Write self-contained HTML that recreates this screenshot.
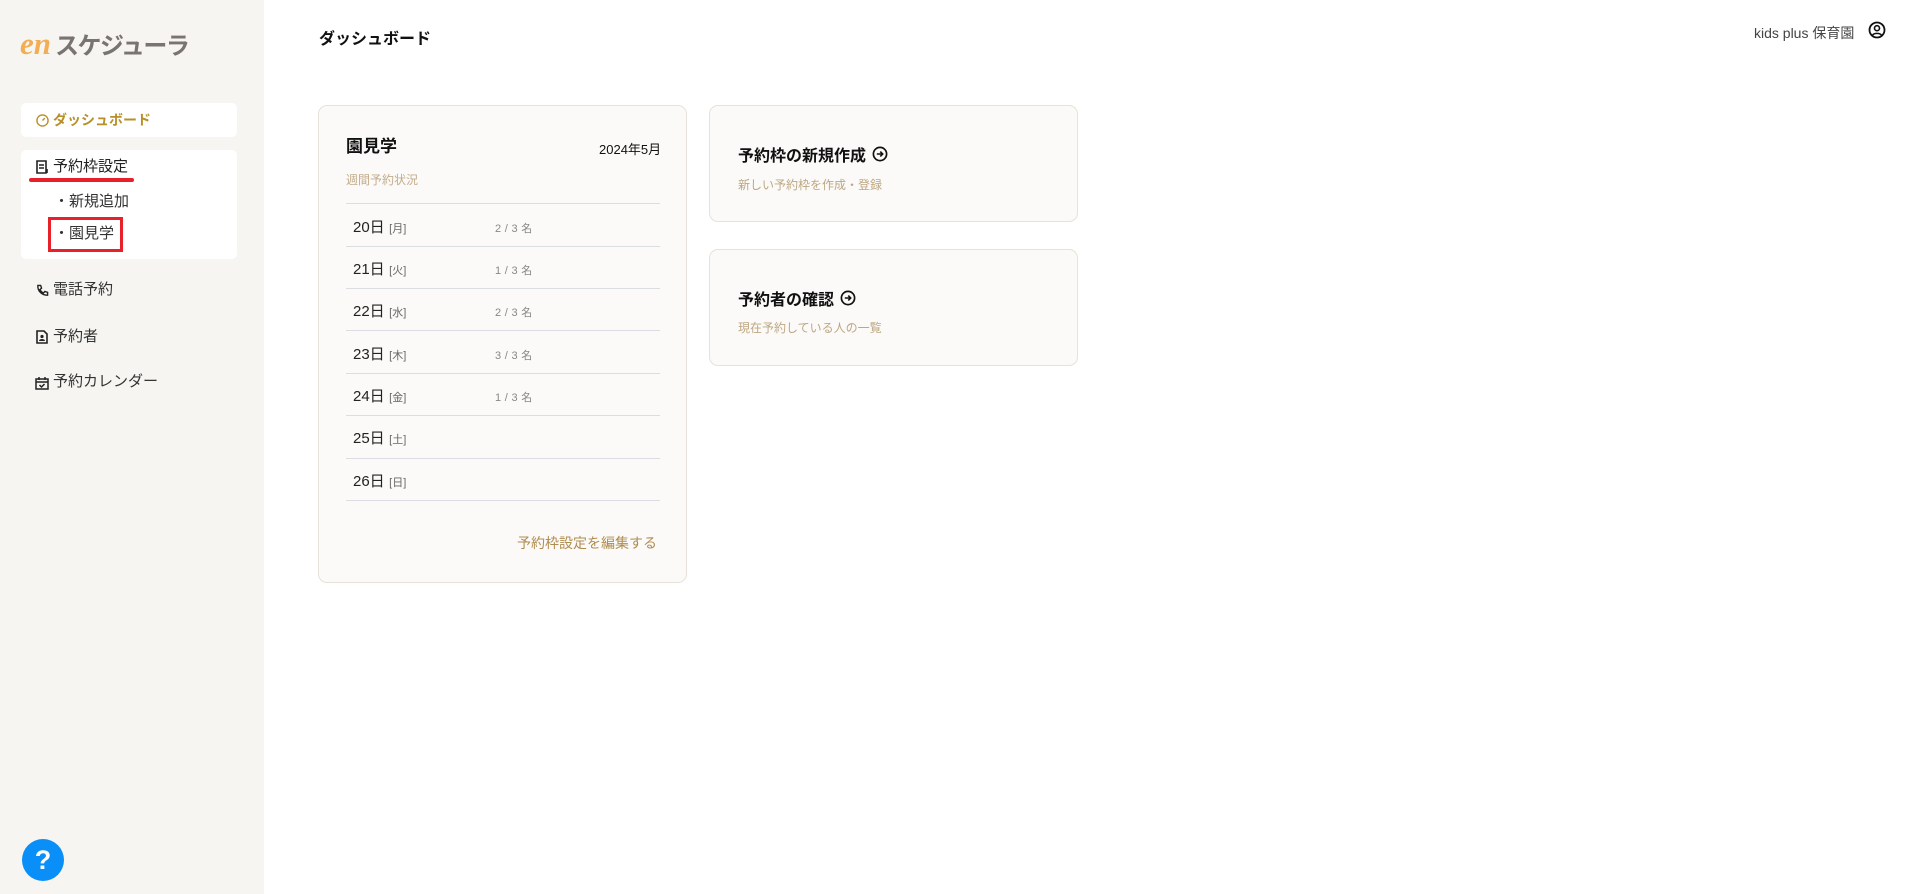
<!DOCTYPE html>
<html><head><meta charset="utf-8"><style>
*{margin:0;padding:0;box-sizing:border-box}
body{width:1906px;height:894px;background:#fff;font-family:"Liberation Sans","Noto Sans CJK JP",sans-serif;position:relative;overflow:hidden;color:#222}
.abs{position:absolute;white-space:nowrap}
.side{position:absolute;left:0;top:0;width:264px;height:894px;background:#f6f5f2}
.box{position:absolute;left:21px;width:216px;background:#fff;border-radius:5px}
.mi{font-size:15px;line-height:20px;color:#333}
.card{position:absolute;background:#fbfaf8;border:1px solid #e6e2da;border-radius:9px}
.line{position:absolute;left:346px;width:314px;height:1px;background:#dcdde2}
.d{font-size:15px;color:#222}
.w{font-size:11px;color:#666}
.c{font-size:11px;color:#888;letter-spacing:0.3px}
</style></head><body>
<div class="side">
  <div class="abs" style="left:20px;top:27px;line-height:34px;font-weight:bold;">
    <span style="font-family:'Liberation Serif',serif;font-style:italic;color:#f2ad55;font-size:31px">en</span><span style="color:#7a7470;font-size:24px;letter-spacing:-1.5px;margin-left:4px">スケジューラ</span></div>
  <div class="box" style="top:103px;height:34px"></div>
  <div class="box" style="top:150px;height:109px"></div>
  <svg class="abs" style="left:36px;top:114px" width="13" height="13" viewBox="0 0 14 14"><circle cx="7" cy="7" r="6" fill="none" stroke="#b8902a" stroke-width="1.5"/><path d="M7 7l2.5-2.5" stroke="#b8902a" stroke-width="1.5"/></svg>
  <div class="abs mi" style="left:53px;top:110px;color:#b8902a;font-weight:bold;font-size:14px">ダッシュボード</div>
  <svg class="abs" style="left:36px;top:160px" width="13" height="14" viewBox="0 0 13 14"><path d="M1 1h9v12H1z M3 5h5M3 8h5M11 9v4" fill="none" stroke="#222" stroke-width="1.6"/></svg>
  <div class="abs mi" style="left:53px;top:157px;color:#222">予約枠設定</div>
  <div class="abs" style="left:29px;top:178px;width:105px;height:4px;background:#e8202a;border-radius:2px"></div>
  <div class="abs mi" style="left:54px;top:192px">・新規追加</div>
  <div class="abs" style="left:48px;top:217px;width:75px;height:35px;border:3px solid #e8202a"></div>
  <div class="abs mi" style="left:54px;top:224px">・園見学</div>
  <svg class="abs" style="left:36px;top:284px" width="13" height="13" viewBox="0 0 14 14"><path d="M2 1.5l3 0 1 3-1.8 1.5a8 8 0 0 0 3.8 3.8l1.5-1.8 3 1v3c-6 .5-11-4.5-10.5-10.5z" fill="none" stroke="#222" stroke-width="1.5"/></svg>
  <div class="abs mi" style="left:53px;top:280px">電話予約</div>
  <svg class="abs" style="left:36px;top:330px" width="12" height="14" viewBox="0 0 12 14"><path d="M1 1h7l3 3v9H1z" fill="none" stroke="#222" stroke-width="1.6"/><circle cx="6" cy="6.5" r="1.6" fill="#222"/><path d="M3 11a3 2 0 0 1 6 0z" fill="#222"/></svg>
  <div class="abs mi" style="left:53px;top:327px">予約者</div>
  <svg class="abs" style="left:35px;top:376px" width="14" height="14" viewBox="0 0 14 14"><path d="M1 3h12v10H1zM1 6h12M4 1v3M10 1v3M4.5 9l2 2 3-3" fill="none" stroke="#222" stroke-width="1.5"/></svg>
  <div class="abs mi" style="left:53px;top:372px">予約カレンダー</div>
  <div class="abs" style="left:22px;top:839px;width:42px;height:42px;border-radius:50%;background:#0a8ef8;color:#fff;font-size:27px;font-weight:bold;text-align:center;line-height:42px">?</div>
</div>

<div class="abs" style="left:319px;top:25px;font-size:16px;font-weight:bold;color:#111">ダッシュボード</div>
<div class="abs" style="left:1754px;top:23px;font-size:14px;color:#444">kids plus 保育園</div>
<svg class="abs" style="left:1868px;top:21px" width="18" height="18" viewBox="0 0 18 18"><circle cx="9" cy="9" r="7.5" fill="none" stroke="#111" stroke-width="1.8"/><circle cx="9" cy="7.2" r="2.5" fill="none" stroke="#111" stroke-width="1.6"/><path d="M4.3 14.3a5.5 4 0 0 1 9.4 0" fill="none" stroke="#111" stroke-width="1.6"/></svg>

<div class="card" style="left:318px;top:105px;width:369px;height:478px"></div>
<div class="abs" style="left:346px;top:132px;font-size:17px;font-weight:bold;color:#111">園見学</div>
<div class="abs" style="left:599px;top:139px;font-size:13px;color:#111">2024年5月</div>
<div class="abs" style="left:346px;top:171px;font-size:12px;color:#c3ac8c">週間予約状況</div>
<div class="line" style="top:203px"></div>
<div class="abs" style="left:353px;top:216px"><span class="d">20日</span> <span class="w">[月]</span></div><div class="abs c" style="left:495px;top:220px">2 / 3 名</div>
<div class="line" style="top:246px"></div>
<div class="abs" style="left:353px;top:258px"><span class="d">21日</span> <span class="w">[火]</span></div><div class="abs c" style="left:495px;top:262px">1 / 3 名</div>
<div class="line" style="top:288px"></div>
<div class="abs" style="left:353px;top:300px"><span class="d">22日</span> <span class="w">[水]</span></div><div class="abs c" style="left:495px;top:304px">2 / 3 名</div>
<div class="line" style="top:330px"></div>
<div class="abs" style="left:353px;top:343px"><span class="d">23日</span> <span class="w">[木]</span></div><div class="abs c" style="left:495px;top:347px">3 / 3 名</div>
<div class="line" style="top:373px"></div>
<div class="abs" style="left:353px;top:385px"><span class="d">24日</span> <span class="w">[金]</span></div><div class="abs c" style="left:495px;top:389px">1 / 3 名</div>
<div class="line" style="top:415px"></div>
<div class="abs" style="left:353px;top:427px"><span class="d">25日</span> <span class="w">[土]</span></div>
<div class="line" style="top:458px"></div>
<div class="abs" style="left:353px;top:470px"><span class="d">26日</span> <span class="w">[日]</span></div>
<div class="line" style="top:500px"></div>
<div class="abs" style="left:517px;top:533px;font-size:14px;color:#b08c50">予約枠設定を編集する</div>

<div class="card" style="left:709px;top:105px;width:369px;height:117px"></div>
<div class="abs" style="left:738px;top:142px;font-size:16px;font-weight:bold;color:#111">予約枠の新規作成</div>
<svg class="abs" style="left:872px;top:146px" width="16" height="16" viewBox="0 0 16 16"><circle cx="8" cy="8" r="6.6" fill="none" stroke="#111" stroke-width="1.7"/><path d="M4.8 8h5.5M8.3 5.6L10.7 8 8.3 10.4" fill="none" stroke="#111" stroke-width="1.6"/></svg>
<div class="abs" style="left:738px;top:176px;font-size:12px;color:#bda782">新しい予約枠を作成・登録</div>

<div class="card" style="left:709px;top:249px;width:369px;height:117px"></div>
<div class="abs" style="left:738px;top:286px;font-size:16px;font-weight:bold;color:#111">予約者の確認</div>
<svg class="abs" style="left:840px;top:290px" width="16" height="16" viewBox="0 0 16 16"><circle cx="8" cy="8" r="6.6" fill="none" stroke="#111" stroke-width="1.7"/><path d="M4.8 8h5.5M8.3 5.6L10.7 8 8.3 10.4" fill="none" stroke="#111" stroke-width="1.6"/></svg>
<div class="abs" style="left:738px;top:319px;font-size:12px;color:#bda782">現在予約している人の一覧</div>
</body></html>
